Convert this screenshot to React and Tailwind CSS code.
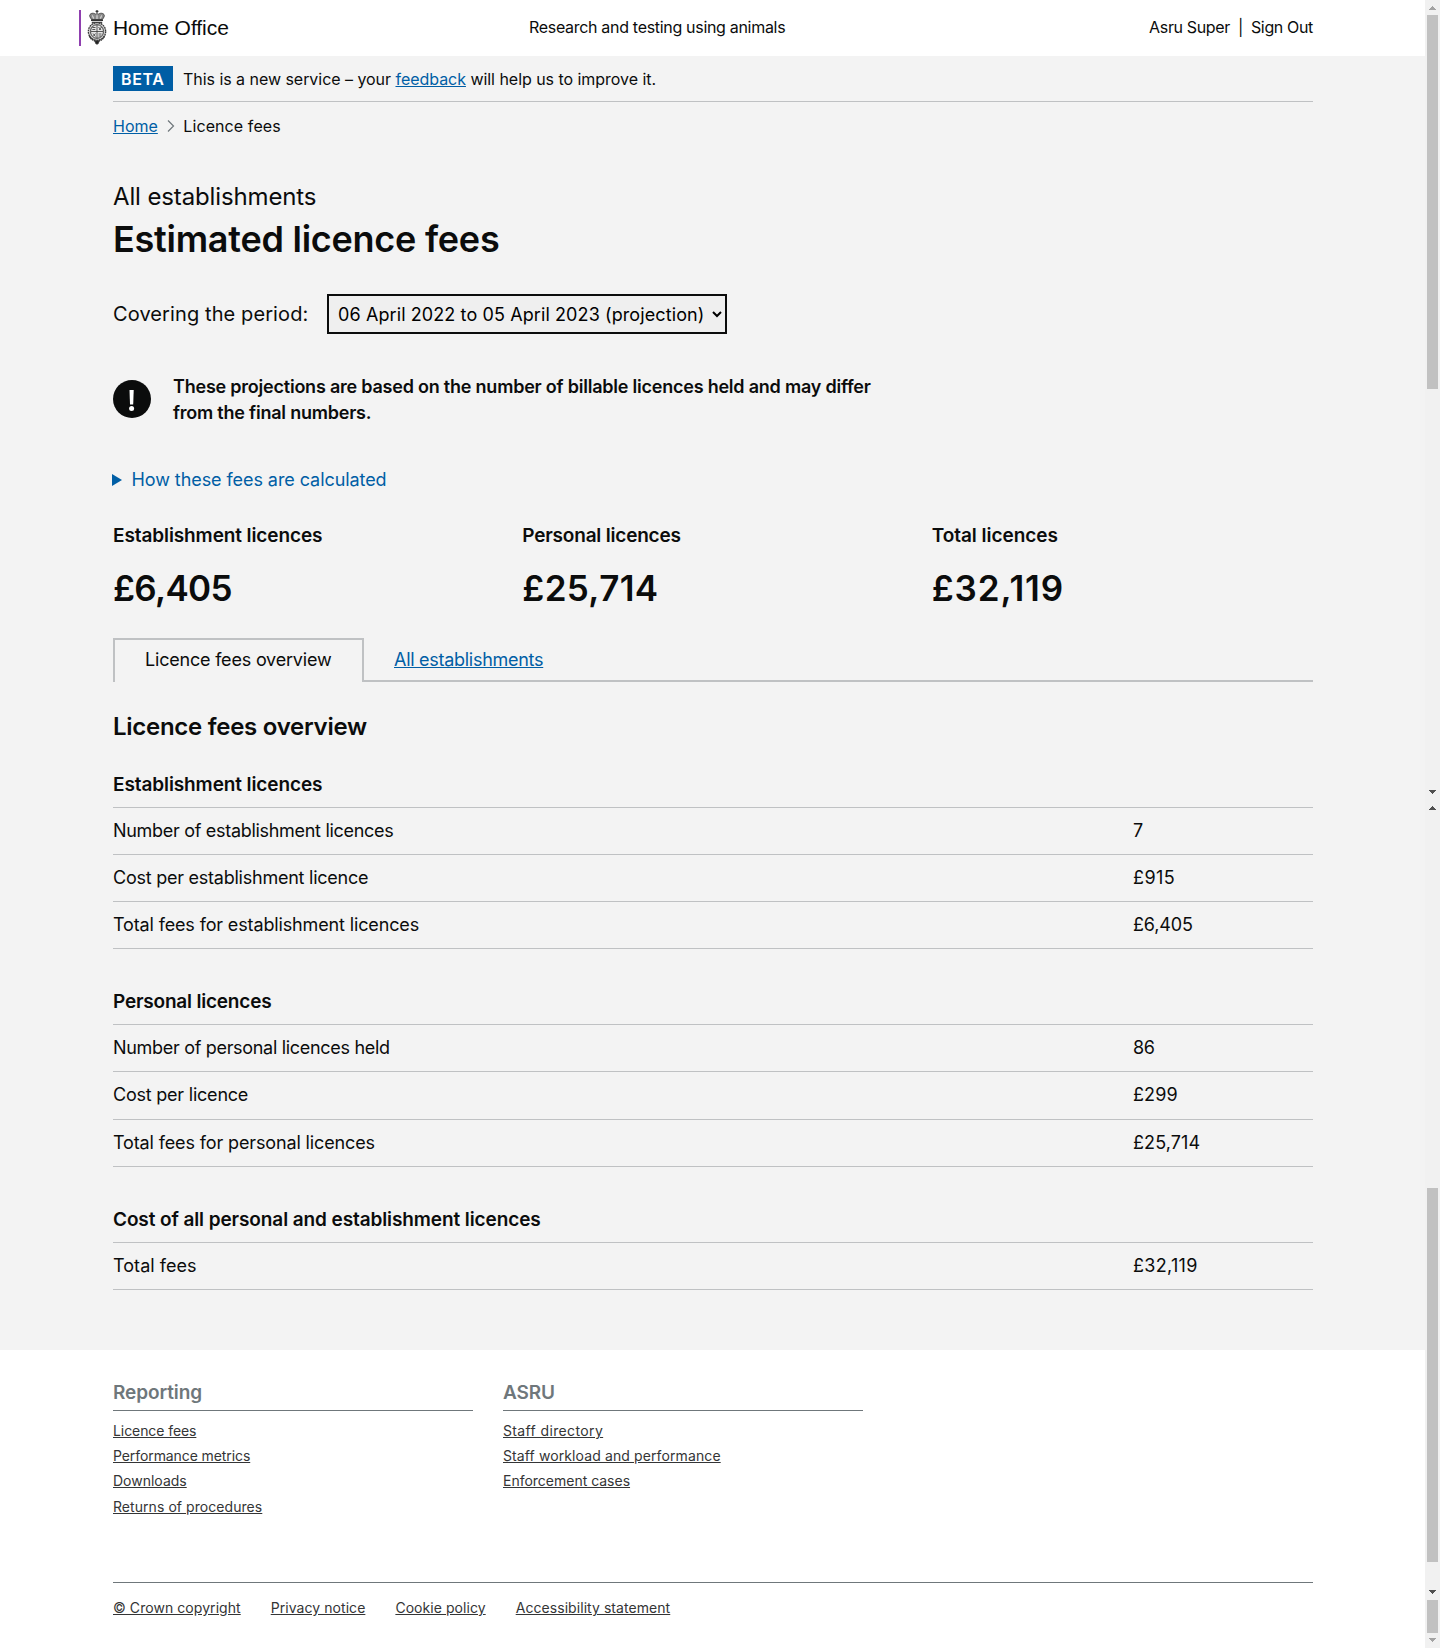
import React from 'react';

const stats = [
  ['Establishment licences', '£6,405', 'tracking-[-0.1px]', 'tracking-[-0.7px]'],
  ['Personal licences', '£25,714', 'tracking-[-0.2px]', 'tracking-[0.35px]'],
  ['Total licences', '£32,119', 'tracking-[-0.03px]', 'tracking-[0.9px]'],
];

const sections = [
  {
    title: 'Establishment licences',
    tracking: 'tracking-[-0.1px]',
    rows: [
      ['Number of establishment licences', '7', 'tracking-[-0.3px]', 'tracking-normal'],
      ['Cost per establishment licence', '£915', 'tracking-[-0.24px]', 'tracking-[0.4px]'],
      ['Total fees for establishment licences', '£6,405', 'tracking-[-0.14px]', 'tracking-[-0.15px]'],
    ],
  },
  {
    title: 'Personal licences',
    tracking: 'tracking-[-0.2px]',
    rows: [
      ['Number of personal licences held', '86', 'tracking-[-0.31px]', 'tracking-[-0.4px]'],
      ['Cost per licence', '£299', 'tracking-[-0.22px]', 'tracking-[0.1px]', true],
      ['Total fees for personal licences', '£25,714', 'tracking-[-0.13px]', 'tracking-[0.1px]'],
    ],
  },
  {
    title: 'Cost of all personal and establishment licences',
    tracking: 'tracking-[-0.1px]',
    rows: [['Total fees', '£32,119', 'tracking-[0.05px]', 'tracking-[0.3px]']],
  },
];

const footerColumns = [
  [
    'Reporting',
    [
      ['Licence fees', 'tracking-[-0.08px]'],
      ['Performance metrics', 'tracking-[-0.09px]'],
      ['Downloads', 'tracking-normal'],
      ['Returns of procedures', 'tracking-[0.06px]'],
    ],
  ],
  [
    'ASRU',
    [
      ['Staff directory', 'tracking-[0.37px]'],
      ['Staff workload and performance', 'tracking-[0.11px]'],
      ['Enforcement cases', 'tracking-[-0.01px]'],
    ],
  ],
];

const legal = ['© Crown copyright', 'Privacy notice', 'Cookie policy', 'Accessibility statement'];

function Crest() {
  return (
    <svg width="20" height="35" viewBox="0 0 20 35" fill="none" stroke="#333" strokeWidth="0.8" className="-ml-px">
      <path d="M10 0v4M8.600 1.400h2.800" strokeWidth="1.2" />
      <path d="M3 4.500c1.600-2 5-1.500 7 .8 2-2.300 5.400-2.800 7-.8 1 1.500-.3 3-1.500 5H4.500C3.300 7.500 2 6 3 4.500z" fill="#8a8a8a" />
      <path d="M5.500 5.500l1 3M14.500 5.500l-1 3M10 5v4" stroke="#fff" strokeWidth="0.8" />
      <path d="M4 10.300h12" strokeWidth="1.500" />
      <path d="M5 12h10v1.200H5z" fill="#555" strokeWidth="0.4" />
      <ellipse cx="10" cy="21.500" rx="8.700" ry="8.800" fill="#c9c9c9" strokeWidth="1.200" strokeDasharray="1.800 0.700" />
      <ellipse cx="10" cy="21.500" rx="6.500" ry="6.800" fill="#e6e6e6" strokeWidth="0.9" />
      <path d="M10 15v13M4 21.500h12" />
      <path d="M5.500 17.500h3M5.300 19.500h3M11.500 17l2.500 3M14.500 17l-2.500 3M6 23.500l2.500 3M8.500 23.500l-2 2.500M11.500 24h3M11.500 26h2.500" />
      <path d="M2.500 26c1.500 3.500 4 4.500 7.500 5.500 3.500-1 6-2 7.500-5.500" strokeWidth="1.500" strokeDasharray="1.600 0.600" />
      <path d="M8 31h4l-.6 2.400L10 34.300l-1.400-.9z" fill="#222" />
    </svg>
  );
}

function Arrow({ up, className }) {
  return (
    <svg width="7" height="4" viewBox="0 0 7 4" shapeRendering="crispEdges" className={className} fill="currentColor">
      {up ? <path d="M3 0h1v1h1v1h1v1h1v1H0V3h1V2h1V1h1z" /> : <path d="M0 0h7v1H6v1H5v1H4v1H3V3H2V2H1V1H0z" />}
    </svg>
  );
}

function Scrollbar() {
  return (
    <div className="flex h-[1648px] w-[15px] shrink-0 flex-col items-center bg-[#f1f1f1]">
      <Arrow up className="mt-[6px] text-[#a3a3a3]" />
      <div className="mt-[5px] h-[374px] w-[11px] bg-[#c1c1c1]" />
      <Arrow className="mt-[401px] text-[#505050]" />
      <Arrow up className="mt-[12px] text-[#505050]" />
      <div className="mt-[378px] h-[374px] w-[11px] bg-[#c1c1c1]" />
      <Arrow className="mt-[28px] text-[#505050]" />
      <div className="mt-[6px] h-[33px] w-[11px] bg-[#c1c1c1]" />
      <Arrow className="mt-[5px] text-[#a3a3a3]" />
    </div>
  );
}

function Section({ title, tracking, rows }) {
  return (
    <section>
      <h3 className={`text-[19px] leading-[26px] font-semibold ${tracking}`}>{title}</h3>
      <dl className="mt-[9px] border-t border-[#bfc1c3] text-[18px]">
        {rows.map(([label, value, labelTracking, valueTracking, tall]) => (
          <div key={label} className={`flex border-b border-[#bfc1c3] pt-[10px] leading-[26px] ${tall ? 'h-[48px]' : 'h-[47px]'}`}>
            <dt className={`w-[1020px] ${labelTracking}`}>{label}</dt>
            <dd className={valueTracking}>{value}</dd>
          </div>
        ))}
      </dl>
    </section>
  );
}

export default function App() {
  return (
    <div className="flex h-[1648px] w-[1440px] overflow-hidden bg-white font-['Inter',sans-serif] text-[#0b0c0c]">
      <div className="w-[1425px] shrink-0">
        <header className="flex h-[56px] pl-[79px] pr-[112px]">
          <div className="mt-[10px] flex h-[36px] w-[450px] border-l-2 border-[#8f3faf] pl-[7px]">
            <Crest />
            <span className="ml-[6px] mt-[5px] font-['Liberation_Sans',sans-serif] text-[21px] leading-[26px] tracking-[-0.05px]">Home Office</span>
          </div>
          <div className="mt-[15px] leading-6 tracking-[-0.31px]">Research and testing using animals</div>
          <div className="ml-auto mt-[15px] flex gap-[8px] leading-6 tracking-[-0.35px]">
            <span>Asru Super</span>
            <span>|</span>
            <span>Sign Out</span>
          </div>
        </header>

        <main className="h-[1294px] bg-[#f3f3f3] pl-[113px] pr-[112px]">
          <div className="flex h-[46px] items-start border-b border-[#bfc1c3] pt-[10px]">
            <strong className="h-[25px] w-[60px] bg-[#005ea5] pl-[8px] font-semibold leading-[26px] tracking-[0.6px] text-white">BETA</strong>
            <span className="ml-[10px] leading-[26px] tracking-[-0.04px]">
              This is a new service – your <a className="text-[#005ea5] underline">feedback</a> will help us to improve it.
            </span>
          </div>

          <nav className="mt-[12px] flex h-6 items-center leading-6">
            <a className="text-[#005ea5] underline">Home</a>
            <svg width="8" height="12" viewBox="0 0 8 12" className="ml-[9px] mr-[8.500px]" fill="none" stroke="#6f777b" strokeWidth="1.2">
              <path d="M1 0.500L6.500 6 1 11.500" />
            </svg>
            <span className="tracking-[0.09px]">Licence fees</span>
          </nav>

          <p className="mt-[44px] text-[24px] leading-[30px] tracking-[-0.13px]">All establishments</p>
          <h1 className="mt-[7px] text-[36px] leading-[40px] font-semibold tracking-[-0.25px]">Estimated licence fees</h1>

          <div className="mt-[35px] flex h-[40px] items-center">
            <label className="w-[214px] text-[20px] tracking-[0.1px]">Covering the period:</label>
            <select className="h-[40px] w-[400px] border-2 border-[#0b0c0c] bg-[#efefef] p-[5px] text-[18px] tracking-[0.1px] text-black">
              <option>06 April 2022 to 05 April 2023 (projection)</option>
            </select>
          </div>

          <div className="mt-[40px] flex">
            <svg width="38" height="38" viewBox="0 0 38 38" className="mt-[6px]">
              <circle cx="19" cy="19" r="19" fill="#0b0c0c" />
              <path d="M16.500 10h4.200l-.5 14.500h-3.200z" fill="#fff" />
              <circle cx="18.600" cy="28.600" r="2.500" fill="#fff" />
            </svg>
            <p className="ml-[22px] w-[720px] text-[18px] leading-[26px] font-semibold tracking-[-0.22px]">
              These projections are based on the number of billable licences held and may differ
              <br />
              from the final numbers.
            </p>
          </div>

          <div className="mt-[41px] flex h-[26px] items-center text-[18px] leading-[26px] tracking-[-0.07px] text-[#005ea5]">
            <svg width="10" height="12" viewBox="0 0 10 12" className="mr-[9.500px] -ml-px">
              <path d="M0 0l10 6-10 6z" fill="currentColor" />
            </svg>
            How these fees are calculated
          </div>

          <div className="mt-[30px] grid w-[1198px] grid-cols-3 gap-[30px]">
            {stats.map(([label, value, labelTracking, valueTracking]) => (
              <div key={label}>
                <h3 className={`text-[19px] leading-[26px] font-semibold ${labelTracking}`}>{label}</h3>
                <p className={`mt-[19px] text-[35px] leading-[40px] font-semibold ${valueTracking}`}>{value}</p>
              </div>
            ))}
          </div>

          <div className="mt-[30px] flex h-[44px] text-[18px]">
            <div className="w-[251px] border-2 border-b-0 border-[#bfc1c3] pl-[30px] pt-[7px] leading-[26px] tracking-[-0.2px]">Licence fees overview</div>
            <div className="flex-1 border-b-2 border-[#bfc1c3] pl-[30px] pt-[9px] leading-[26px] tracking-[-0.28px]">
              <a className="text-[#005ea5] underline">All establishments</a>
            </div>
          </div>

          <h2 className="mb-[30px] mt-[30px] text-[24px] leading-[30px] font-semibold tracking-[-0.27px]">Licence fees overview</h2>
          <div className="flex flex-col gap-[40px]">
            {sections.map((s) => (
              <Section key={s.title} {...s} />
            ))}
          </div>
        </main>

        <footer className="pl-[113px] pr-[112px] pt-[30px] text-[14px] text-[#343536]">
          <div className="flex h-[202px] gap-[30px]">
            {footerColumns.map(([title, links]) => (
              <div key={title} className="w-[360px]">
                <h3 className="h-[31px] border-b border-[#6f777b] text-[19px] leading-[26px] font-semibold tracking-[-0.1px] text-[#6f777b]">{title}</h3>
                <ul className="mt-[7px] leading-[25.200px]">
                  {links.map(([l, tracking]) => (
                    <li key={l}><a className={`underline ${tracking}`}>{l}</a></li>
                  ))}
                </ul>
              </div>
            ))}
          </div>
          <div className="flex gap-[30px] border-t border-[#6f777b] pt-[13px] leading-6 tracking-[0.06px]">
            {legal.map((l) => (
              <a key={l} className="underline">{l}</a>
            ))}
          </div>
        </footer>
      </div>
      <Scrollbar />
    </div>
  );
}
